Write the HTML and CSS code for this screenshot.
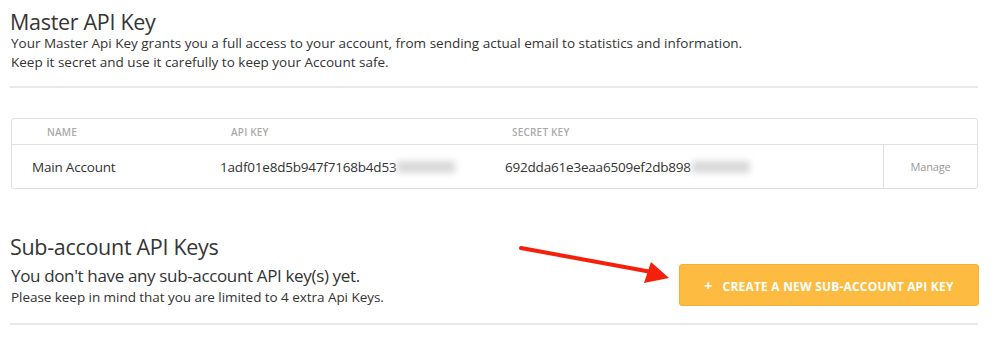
FILE: index.html
```html
<!DOCTYPE html>
<html>
<head>
<meta charset="utf-8">
<link rel="stylesheet" href="styles.css">
</head>
<body>
<div class="page">
  <section class="master">
    <h1 class="title">Master API Key</h1>
    <p class="desc">Your Master Api Key grants you a full access to your account, from sending actual email to statistics and information.<br>Keep it secret and use it carefully to keep your Account safe.</p>
    <div class="rule"></div>
    <div class="keys">
      <div class="head c-name">NAME</div>
      <div class="head c-api">API KEY</div>
      <div class="head c-secret">SECRET KEY</div>
      <div class="head c-manage"></div>
      <div class="cell c-name">Main Account</div>
      <div class="cell c-api">1adf01e8d5b947f7168b4d53<span class="blur"></span></div>
      <div class="cell c-secret">692dda61e3eaa6509ef2db898<span class="blur"></span></div>
      <div class="cell c-manage manage">Manage</div>
    </div>
  </section>
  <section class="sub">
    <div class="sub-row">
      <div class="sub-text">
        <h2 class="title">Sub-account API Keys</h2>
        <p class="lead">You don't have any sub-account API key(s) yet.</p>
        <p class="note">Please keep in mind that you are limited to 4 extra Api Keys.</p>
      </div>
      <button class="create"><span class="plus">+</span>CREATE A NEW SUB-ACCOUNT API KEY</button>
    </div>
    <div class="rule"></div>
  </section>
</div>
<svg class="arrow" width="170" height="50" viewBox="0 0 170 50">
  <line x1="4" y1="6" x2="140" y2="31" stroke="#f4200c" stroke-width="4" stroke-linecap="round"/>
  <polygon points="152,36 127,41 134,20" fill="#f4200c"/>
</svg>
</body>
</html>
```
FILE: styles.css
```css
html, body {
  margin: 0;
  padding: 0;
  background: #fff;
}
body {
  font-family: "Open Sans", "Noto Sans", sans-serif;
  color: #333;
  position: relative;
}
.page {
  width: 968px;
  padding: 10px 0 0 10px;
}
.title {
  margin: 0;
  font-size: 21.5px;
  font-weight: 400;
  line-height: 24px;
  letter-spacing: -0.3px;
  color: #363636;
}
.desc {
  margin: 0 0 0 1px;
  font-size: 13.5px;
  line-height: 19px;
}
.rule {
  height: 2px;
  background: #e9e9e9;
  margin-top: 14px;
}
.keys {
  margin: 30px 0 0 1px;
  border: 1px solid #e1e1e1;
  border-radius: 3px;
  display: grid;
  grid-template-columns: 189px 284px 398px 1fr;
  grid-template-rows: 26px 43px;
}
.head {
  font-size: 10px;
  font-weight: 600;
  color: #aaa;
  border-bottom: 1px solid #e1e1e1;
  display: flex;
  align-items: center;
  letter-spacing: 0.2px;
}
.head.c-name { padding-left: 35px; }
.head.c-api { padding-left: 30px; }
.head.c-secret { padding-left: 27px; }
.cell {
  font-size: 13.5px;
  display: flex;
  align-items: center;
  letter-spacing: -0.2px;
}
.cell.c-name { padding-left: 20px; }
.cell.c-api { padding-left: 19px; }
.cell.c-secret { padding-left: 20px; }
.blur {
  display: inline-block;
  width: 58px;
  height: 12px;
  background: #d9d9d9;
  filter: blur(3px);
  margin-left: 1px;
}
.manage {
  border-left: 1px solid #e1e1e1;
  justify-content: center;
  font-size: 11px;
  color: #999;
}
.sub {
  margin-top: 46px;
}
.sub-row {
  display: flex;
  justify-content: space-between;
  align-items: flex-end;
}
.lead {
  margin: 6px 0 0 1px;
  font-size: 17px;
  line-height: 22px;
  letter-spacing: -0.35px;
}
.note {
  margin: 0 0 0 1px;
  font-size: 13.5px;
  line-height: 20px;
  letter-spacing: -0.05px;
}
.create {
  width: 300px;
  height: 42px;
  margin: 0 -1px 1px 0;
  background: #fdbb41;
  border: 1px solid #f3b03a;
  border-radius: 3px;
  color: #fff;
  font-family: "Open Sans", "Noto Sans", sans-serif;
  font-size: 12px;
  font-weight: 700;
  letter-spacing: 0.2px;
  cursor: pointer;
}
.plus {
  font-size: 14px;
  margin-right: 10px;
}
.sub .rule {
  margin-top: 16px;
}
.arrow {
  position: absolute;
  left: 517px;
  top: 242px;
}
```
